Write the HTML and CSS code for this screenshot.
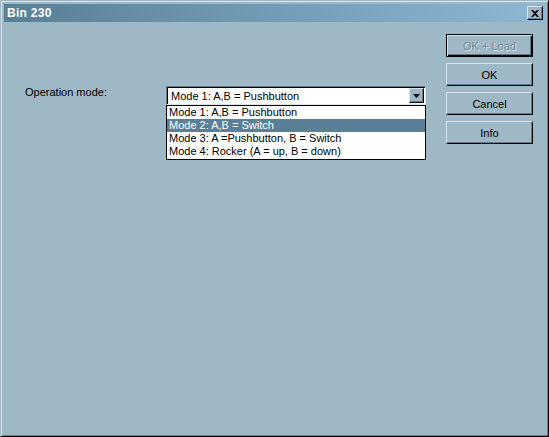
FILE: index.html
```html
<!DOCTYPE html>
<html>
<head>
<meta charset="utf-8">
<link rel="stylesheet" href="styles.css">
</head>
<body>
<div class="window">
  <div class="titlebar">
    <span class="title">Bin 230</span>
    <span class="close">
      <svg width="8" height="7" viewBox="0 0 8 7"><path d="M0 0h2l2 2 2-2h2L5 3.5 8 7H6L4 5 2 7H0l3-3.5z" fill="#000"/></svg>
    </span>
  </div>
  <div class="client">
    <div class="form">
      <div class="row">
        <label class="label">Operation mode:</label>
        <div class="combo">
          <div class="combo-field">
            <span class="combo-text">Mode 1: A,B = Pushbutton</span>
            <span class="combo-btn"><svg width="7" height="4" viewBox="0 0 7 4"><path d="M0 0h7L3.5 4z" fill="#000"/></svg></span>
          </div>
          <ul class="list">
            <li>Mode 1: A,B = Pushbutton</li>
            <li class="sel">Mode 2: A,B = Switch</li>
            <li>Mode 3: A =Pushbutton, B = Switch</li>
            <li>Mode 4: Rocker (A = up, B = down)</li>
          </ul>
        </div>
      </div>
    </div>
    <div class="buttons">
      <button class="btn default disabled">OK + Load</button>
      <button class="btn">OK</button>
      <button class="btn">Cancel</button>
      <button class="btn">Info</button>
    </div>
  </div>
</div>
</body>
</html>
```

FILE: styles.css
```css
* { box-sizing: border-box; }
html, body { margin: 0; padding: 0; }
body {
  width: 549px;
  height: 437px;
  font-family: "Liberation Sans", Arial, sans-serif;
  font-size: 11px;
  color: #000;
  background: #9fb8c6;
}
.window {
  width: 549px;
  height: 437px;
  display: flex;
  flex-direction: column;
  background: #9fb8c6;
  border-top: 1px solid #9fb8c6;
  border-left: 1px solid #9fb8c6;
  border-right: 1px solid #000;
  border-bottom: 1px solid #000;
  box-shadow: inset 1px 1px 0 #d8e4ea, inset -1px -1px 0 #5f7f92;
  padding: 3px;
}
.titlebar {
  height: 18px;
  display: flex;
  align-items: center;
  justify-content: space-between;
  padding: 0 2px 0 3px;
  background: linear-gradient(to right, #587f96, #8cb8d4);
}
.title {
  color: #fff;
  font-weight: bold;
  font-size: 12px;
  letter-spacing: 0.3px;
}
.close {
  width: 16px;
  height: 14px;
  display: flex;
  align-items: center;
  justify-content: center;
  background: #9fb8c6;
  border-top: 1px solid #d8e4ea;
  border-left: 1px solid #d8e4ea;
  border-right: 1px solid #000;
  border-bottom: 1px solid #000;
  box-shadow: inset -1px -1px 0 #5f7f92;
}
.client {
  flex: 1;
  display: flex;
  justify-content: space-between;
  padding: 12px 12px 0 21px;
}
.form {
  padding-top: 52px;
}
.row {
  display: flex;
  align-items: flex-start;
}
.label {
  width: 141px;
  line-height: 12px;
}
.combo {
  position: relative;
  width: 260px;
}
.combo-field {
  height: 19px;
  display: flex;
  align-items: center;
  justify-content: space-between;
  background: #fff;
  border-top: 1px solid #5f7f92;
  border-left: 1px solid #5f7f92;
  border-right: 1px solid #d8e4ea;
  border-bottom: 1px solid #d8e4ea;
  box-shadow: inset 1px 1px 0 #000;
  padding: 1px 1px 1px 4px;
}
.combo-text { line-height: 14px; }
.combo-btn {
  width: 15px;
  height: 15px;
  display: flex;
  align-items: center;
  justify-content: center;
  background: #9fb8c6;
  border-top: 1px solid #d8e4ea;
  border-left: 1px solid #d8e4ea;
  border-right: 1px solid #000;
  border-bottom: 1px solid #000;
  box-shadow: inset -1px -1px 0 #5f7f92;
}
.list {
  position: absolute;
  left: 0;
  top: 19px;
  width: 260px;
  margin: 0;
  padding: 0 0 1px;
  list-style: none;
  background: #fff;
  border: 1px solid #000;
}
.list li {
  height: 13px;
  line-height: 13px;
  padding-left: 2px;
}
.list li.sel {
  background: #5a8098;
  color: #fff;
}
.buttons {
  display: flex;
  flex-direction: column;
  gap: 6px;
}
.btn {
  width: 87px;
  height: 23px;
  font-family: inherit;
  font-size: 11px;
  color: #000;
  background: #9fb8c6;
  border-top: 1px solid #d8e4ea;
  border-left: 1px solid #d8e4ea;
  border-right: 1px solid #000;
  border-bottom: 1px solid #000;
  box-shadow: inset -1px -1px 0 #5f7f92;
  padding: 0;
  margin: 0;
}
.btn.default {
  border: 1px solid #000;
  box-shadow: inset 1px 1px 0 #d8e4ea, inset -1px -1px 0 #000, inset -2px -2px 0 #5f7f92;
}
.btn.disabled {
  color: #6d8898;
  text-shadow: 1px 1px 0 #d8e4ea;
}
```
